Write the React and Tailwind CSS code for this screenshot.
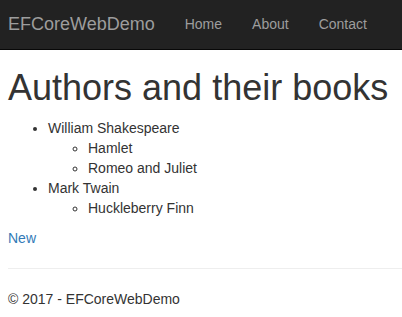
export default function App() {
  return (
    <div className="min-h-[317px] bg-white text-[14px] leading-[20px] text-[#333]" style={{ fontFamily: '"Liberation Sans", Arial, sans-serif' }}>
      <nav className="h-[50px] bg-[#222] border-b border-[#080808] flex items-center px-[8px] pb-[1px]">
        <span className="text-[18px] leading-[20px] text-[#9d9d9d] pr-[15px]">EFCoreWebDemo</span>
        <ul className="flex">
          <li><a className="block px-[15px] leading-[20px] text-[#9d9d9d]">Home</a></li>
          <li><a className="block px-[15px] leading-[20px] text-[#9d9d9d]">About</a></li>
          <li><a className="block px-[15px] leading-[20px] text-[#9d9d9d]">Contact</a></li>
        </ul>
      </nav>
      <div className="pl-[8px]">
        <h1 className="text-[36px] leading-[1.1] mt-[18px] mb-[10px] font-normal">Authors and their books</h1>
        <ul className="list-disc pl-[40px] mb-[10px]">
          <li>
            William Shakespeare
            <ul className="list-[circle] pl-[40px]">
              <li>Hamlet</li>
              <li>Romeo and Juliet</li>
            </ul>
          </li>
          <li>
            Mark Twain
            <ul className="list-[circle] pl-[40px]">
              <li>Huckleberry Finn</li>
            </ul>
          </li>
        </ul>
        <p className="mb-[10px]"><a className="text-[#337ab7]">New</a></p>
        <hr className="mt-[20px] mb-[20px] border-0 border-t border-[#eee]" />
        <footer>
          <p>© 2017 - EFCoreWebDemo</p>
        </footer>
      </div>
    </div>
  );
}
